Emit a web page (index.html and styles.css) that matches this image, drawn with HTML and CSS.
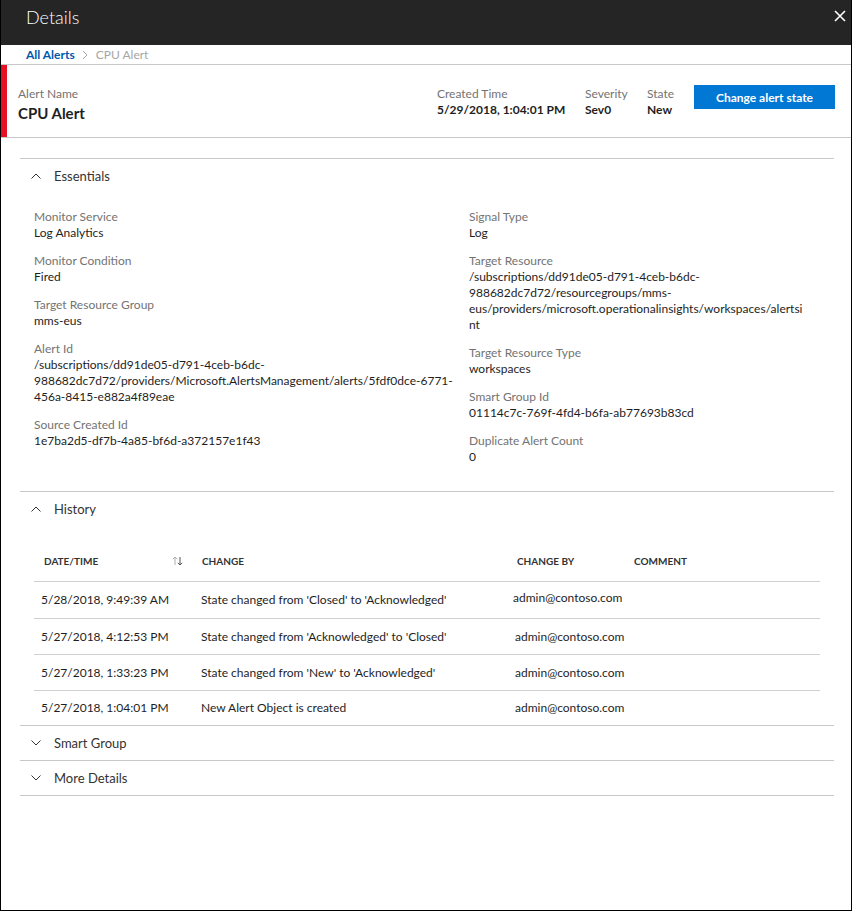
FILE: index.html
```html
<!DOCTYPE html>
<html>
<head>
<meta charset="utf-8">
<title>Details</title>
<link rel="stylesheet" href="styles.css">
</head>
<body>
<div class="panel">
  <div class="titlebar">
    <span class="title">Details</span>
    <svg class="close" width="12" height="12" viewBox="0 0 12 12"><path d="M1 1L11 11M11 1L1 11" stroke="#fff" stroke-width="1.6" fill="none"/></svg>
  </div>
  <div class="breadcrumb">
    <span class="crumb-link">All Alerts</span>
    <svg class="crumb-sep" width="6" height="10" viewBox="0 0 6 10"><path d="M1 1L5 5L1 9" stroke="#a6a6a6" stroke-width="1" fill="none"/></svg>
    <span class="crumb-current">CPU Alert</span>
  </div>
  <div class="alert-head">
    <div class="sev-bar"></div>
    <div class="alert-name">
      <div class="lbl">Alert Name</div>
      <div class="alert-title">CPU Alert</div>
    </div>
    <div class="meta meta-time">
      <div class="lbl">Created Time</div>
      <div class="meta-val">5/29/2018, 1:04:01 PM</div>
    </div>
    <div class="meta meta-sev">
      <div class="lbl">Severity</div>
      <div class="meta-val">Sev0</div>
    </div>
    <div class="meta meta-state">
      <div class="lbl">State</div>
      <div class="meta-val">New</div>
    </div>
    <button class="btn">Change alert state</button>
  </div>

  <div class="content">
    <div class="section">
      <div class="sec-head">
        <svg class="chev" width="10" height="6" viewBox="0 0 10 6"><path d="M0.5 5.5L5 1L9.5 5.5" stroke="#333" stroke-width="1" fill="none"/></svg>
        <span>Essentials</span>
      </div>
      <div class="essentials">
        <div class="col col-left">
          <div class="field"><div class="lbl">Monitor Service</div><div class="val">Log Analytics</div></div>
          <div class="field"><div class="lbl">Monitor Condition</div><div class="val">Fired</div></div>
          <div class="field"><div class="lbl">Target Resource Group</div><div class="val">mms-eus</div></div>
          <div class="field"><div class="lbl">Alert Id</div><div class="val">/subscriptions/dd91de05-d791-4ceb-b6dc-<br>988682dc7d72/providers/Microsoft.AlertsManagement/alerts/5fdf0dce-6771-<br>456a-8415-e882a4f89eae</div></div>
          <div class="field"><div class="lbl">Source Created Id</div><div class="val">1e7ba2d5-df7b-4a85-bf6d-a372157e1f43</div></div>
        </div>
        <div class="col col-right">
          <div class="field"><div class="lbl">Signal Type</div><div class="val">Log</div></div>
          <div class="field"><div class="lbl">Target Resource</div><div class="val">/subscriptions/dd91de05-d791-4ceb-b6dc-<br>988682dc7d72/resourcegroups/mms-<br>eus/providers/microsoft.operationalinsights/workspaces/alertsi<br>nt</div></div>
          <div class="field"><div class="lbl">Target Resource Type</div><div class="val">workspaces</div></div>
          <div class="field"><div class="lbl">Smart Group Id</div><div class="val">01114c7c-769f-4fd4-b6fa-ab77693b83cd</div></div>
          <div class="field"><div class="lbl">Duplicate Alert Count</div><div class="val">0</div></div>
        </div>
      </div>
    </div>

    <div class="section">
      <div class="sec-head">
        <svg class="chev" width="10" height="6" viewBox="0 0 10 6"><path d="M0.5 5.5L5 1L9.5 5.5" stroke="#333" stroke-width="1" fill="none"/></svg>
        <span>History</span>
      </div>
      <div class="history">
        <div class="hrow hhead">
          <div class="hc hc-date">DATE/TIME
            <svg class="sort" width="11" height="10" viewBox="0 0 11 10"><path d="M3 9V1M0.8 3.2L3 1L5.2 3.2" stroke="#b0b0b0" stroke-width="1" fill="none"/><path d="M8 1V9M5.8 6.8L8 9L10.2 6.8" stroke="#555" stroke-width="1" fill="none"/></svg>
          </div>
          <div class="hc hc-change">CHANGE</div>
          <div class="hc hc-by">CHANGE BY</div>
          <div class="hc hc-comment">COMMENT</div>
        </div>
        <div class="hrow first">
          <div class="c c-date">5/28/2018, 9:49:39 AM</div>
          <div class="c c-change">State changed from 'Closed' to 'Acknowledged'</div>
          <div class="c c-by c-by-first">admin@contoso.com</div>
          <div class="c"></div>
        </div>
        <div class="hrow">
          <div class="c c-date">5/27/2018, 4:12:53 PM</div>
          <div class="c c-change">State changed from 'Acknowledged' to 'Closed'</div>
          <div class="c c-by">admin@contoso.com</div>
          <div class="c"></div>
        </div>
        <div class="hrow">
          <div class="c c-date">5/27/2018, 1:33:23 PM</div>
          <div class="c c-change">State changed from 'New' to 'Acknowledged'</div>
          <div class="c c-by">admin@contoso.com</div>
          <div class="c"></div>
        </div>
        <div class="hrow last">
          <div class="c c-date">5/27/2018, 1:04:01 PM</div>
          <div class="c c-change">New Alert Object is created</div>
          <div class="c c-by">admin@contoso.com</div>
          <div class="c"></div>
        </div>
      </div>
    </div>

    <div class="section">
      <div class="sec-head">
        <svg class="chev" width="10" height="6" viewBox="0 0 10 6"><path d="M0.5 0.5L5 5L9.5 0.5" stroke="#333" stroke-width="1" fill="none"/></svg>
        <span>Smart Group</span>
      </div>
    </div>
    <div class="section last-section">
      <div class="sec-head">
        <svg class="chev" width="10" height="6" viewBox="0 0 10 6"><path d="M0.5 0.5L5 5L9.5 0.5" stroke="#333" stroke-width="1" fill="none"/></svg>
        <span>More Details</span>
      </div>
    </div>
  </div>
</div>
</body>
</html>
```

FILE: styles.css
```css
* { box-sizing: border-box; }
html, body { margin: 0; padding: 0; background: #fff; }
body {
  font-family: "Segoe UI", Lato, "Open Sans", sans-serif;
  font-size: 12px;
  color: #1e1e1e;
}
.panel {
  width: 852px;
  height: 911px;
  border: 1px solid #000;
  border-top: 0;
  display: flex;
  flex-direction: column;
}
.titlebar {
  height: 45px;
  background: #252525;
  display: flex;
  align-items: flex-start;
  justify-content: space-between;
  padding: 5px 5px 0 25px;
}
.title {
  color: #fff;
  font-size: 18px;
  font-weight: 300;
  line-height: 24px;
}
.close { display: block; margin-top: 5px; }
.breadcrumb {
  height: 20px;
  border-bottom: 1px solid #c8c8c8;
  display: flex;
  align-items: center;
  padding-left: 25px;
  line-height: 16px;
}
.crumb-link { color: #0058ad; font-weight: 700; }
.crumb-sep { margin: 0 8px 0 7px; }
.crumb-current { color: #a6a6a6; }
.alert-head {
  height: 73px;
  border-bottom: 1px solid #c8c8c8;
  display: flex;
  align-items: flex-start;
  padding-right: 16px;
}
.sev-bar {
  width: 6px;
  align-self: stretch;
  background: #e81123;
}
.lbl { color: #737373; line-height: 16px; }
.alert-name { padding: 21px 0 0 11px; flex: 1; }
.alert-title {
  font-size: 15px;
  font-weight: 700;
  line-height: 20px;
  margin-top: 1px;
  color: #1e1e1e;
}
.meta { padding-top: 21px; }
.meta-val { font-weight: 700; line-height: 16px; color: #1e1e1e; }
.meta-time { width: 148px; }
.meta-sev { width: 62px; }
.meta-state { width: 47px; }
.btn {
  margin-top: 20px;
  width: 141px;
  height: 24px;
  border: 0;
  background: #0078d4;
  color: #fff;
  font-family: inherit;
  font-size: 12px;
  font-weight: 700;
  padding: 0;
}
.content { padding: 20px 17px 0 19px; }
.section { border-top: 1px solid #c8c8c8; }
.last-section { border-bottom: 1px solid #c8c8c8; }
.sec-head {
  height: 34px;
  display: flex;
  align-items: center;
  padding-left: 11px;
  font-size: 13px;
  color: #333;
}
.chev { margin-right: 13px; display: block; }
.essentials {
  display: grid;
  grid-template-columns: 435px 1fr;
  padding: 16px 0 14px 14px;
}
.field { margin-bottom: 12px; }
.val { line-height: 16px; color: #1e1e1e; white-space: nowrap; }
.history { padding: 27px 14px 0 14px; }
.hrow {
  display: grid;
  grid-template-columns: 161px 313px 119px 1fr;
  border-bottom: 1px solid #d0d0d0;
  height: 36px;
  align-items: center;
}
.hrow.first { height: 37px; }
.hrow.last { border-bottom: 0; height: 34px; }
.hhead { height: 29px; align-items: start; }
.hc {
  font-size: 10px;
  font-weight: 700;
  color: #333;
  line-height: 16px;
}
.hc-date { padding-left: 10px; display: flex; align-items: center; justify-content: space-between; padding-right: 12px; }
.sort { display: block; }
.hc-change { padding-left: 7px; }
.hc-by { padding-left: 9px; }
.hc-comment { padding-left: 7px; }
.c { line-height: 16px; color: #1e1e1e; white-space: nowrap; }
.c-date { padding-left: 7px; }
.c-change { padding-left: 6px; }
.c-by { padding-left: 7px; }
.c-by-first { padding-left: 5px; margin-top: -5px; }
```
